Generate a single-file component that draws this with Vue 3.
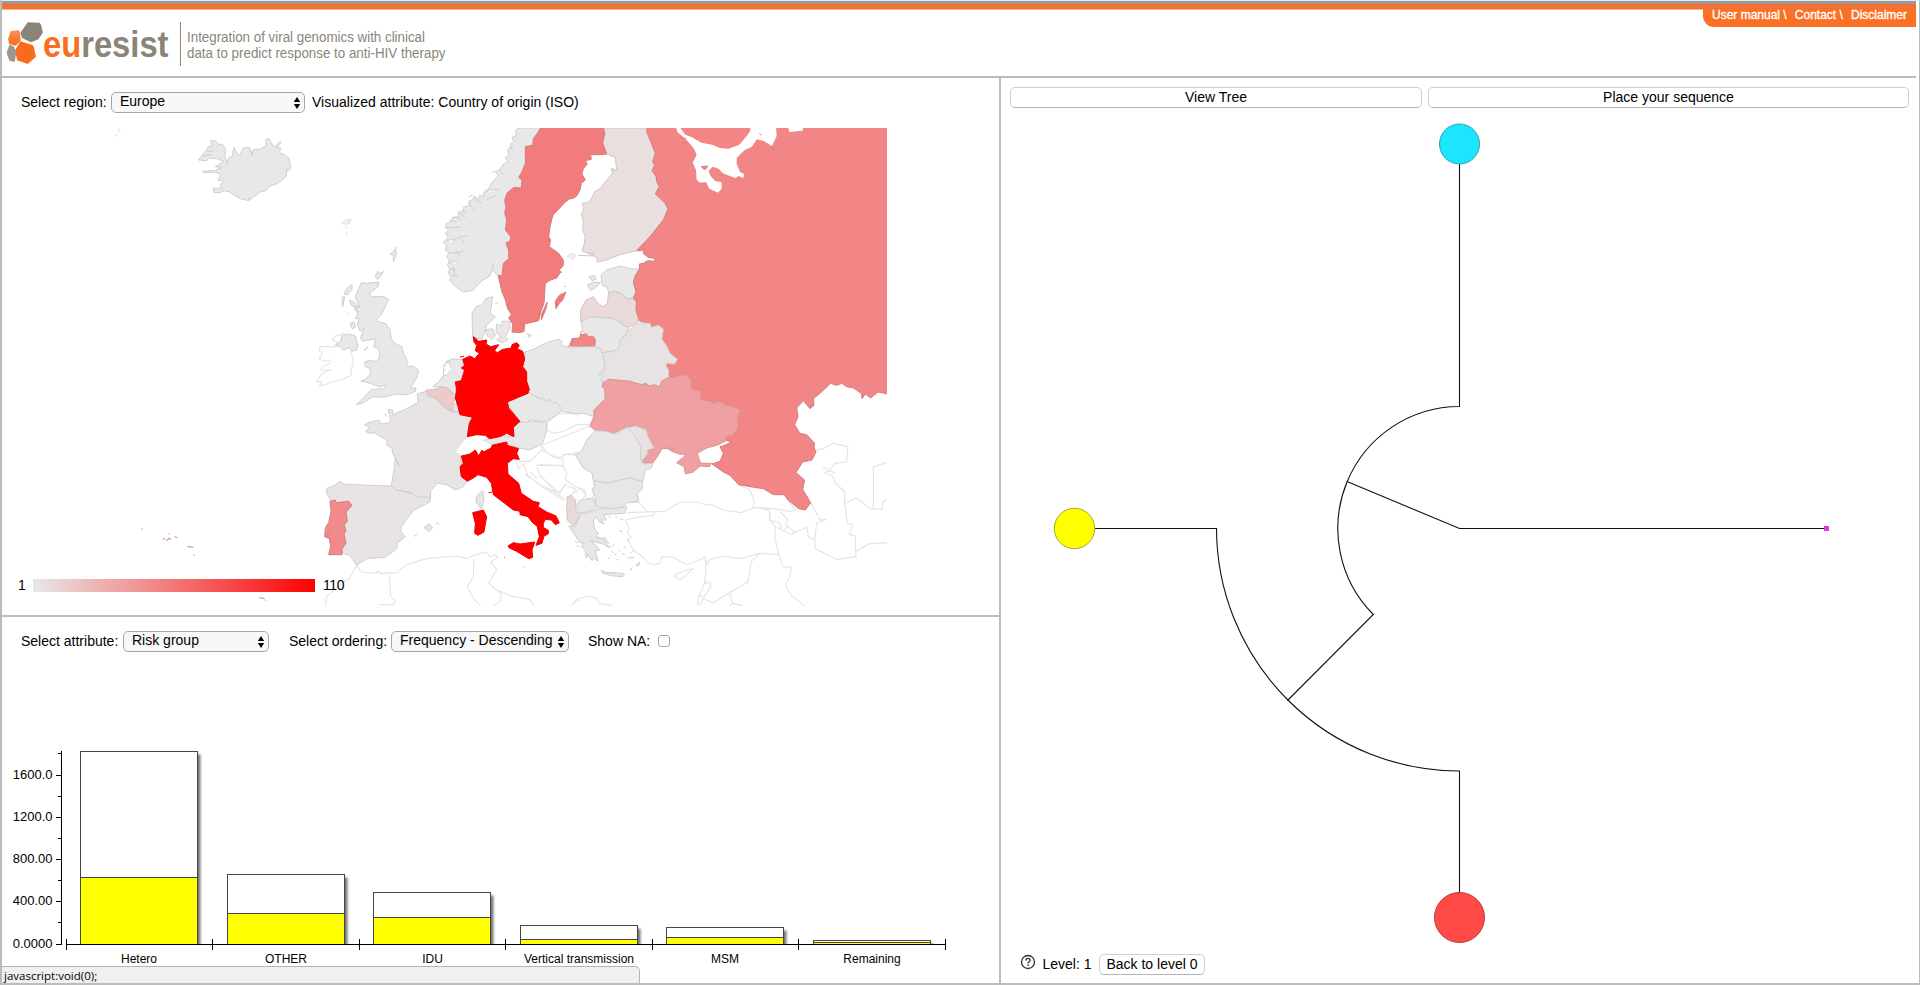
<script setup>
const fills = {
  none: '#ffffff', base: '#e8e8e8', faroe: '#f2f2f2', france: '#e8e4e4', romania: '#e8e6e7', finland: '#e9dfdf',
  latvia: '#ead9d9', belarus: '#e9e2e2', belgium: '#eccaca', sweden: '#f27c7c', russia: '#f28686',
  ukraine: '#f0a0a2', portugal: '#f18b8b', max: '#ff0000',
}

// Each tile holds country outlines in its own local grid (3 units per pixel).
const tiles = [
  { x: 180, y: 120, shapes: [
    ['base', 'M55,120 L68,104 L72,98 L80,92 L84,82 L96,76 L92,62 L106,62 L112,72 L128,74 L136,88 L135,112 L142,126 L147,112 L156,110 L162,82 L172,102 L180,106 L190,84 L208,82 L216,106 L220,88 L240,88 L250,82 L258,78 L258,58 L268,56 L276,74 L286,80 L298,66 L304,66 L290,82 L302,84 L298,98 L312,104 L328,116 L330,130 L332,146 L318,158 L320,168 L306,180 L290,192 L270,198 L256,212 L240,216 L222,230 L206,242 L180,236 L166,228 L150,216 L132,212 L120,218 L102,218 L100,204 L112,206 L126,200 L120,194 L134,184 L114,180 L122,164 L106,156 L70,158 L68,154 L90,152 L104,152 L126,142 L106,140 L132,124 L110,116 L88,114 L80,122Z M142,126 L142,136 M216,106 L214,92 M66,108 L96,104 M80,96 L104,92 M206,240 L210,230 M318,158 L322,144'],
    ['faroe', 'M486,308 L500,300 L514,298 L506,312 L490,312Z M496,335 L504,347 M496,318 L502,326'],
    ['base', 'M650,380 L640,395 L630,402 L640,405 L640,426 L650,400 L646,390Z M586,468 L594,454 L600,460 L610,454 L602,470 L592,478Z M516,494 L500,506 L492,522 L504,524 L516,508Z M486,532 L494,530 L488,560Z M502,584 L508,578'],
    ['base', 'M544,488 L560,490 L596,486 L594,500 L568,520 L574,530 L612,530 L626,538 L616,560 L604,584 L586,602 L600,606 L618,612 L630,630 L634,656 L644,670 L666,680 L670,700 L680,718 L682,740 L700,738 L716,752 L710,774 L700,790 L690,804 L708,804 L706,814 L680,824 L650,822 L632,826 L610,832 L580,830 L566,838 L550,848 L530,854 L550,834 L562,820 L576,808 L610,806 L620,796 L598,800 L580,794 L560,786 L542,784 L556,778 L572,762 L568,744 L556,740 L554,726 L566,722 L592,724 L598,710 L598,690 L582,680 L584,664 L590,656 L566,660 L548,664 L542,654 L552,626 L540,634 L532,612 L538,596 L526,596 L534,576 L524,570 L534,552 L526,530 L532,516Z M508,540 L524,548 L528,566 L514,556Z M510,610 L522,606 L526,622 L516,626Z M528,560 L540,556 L530,574 L544,572 M552,690 L564,680 L556,690Z'],
    ['base', 'M486,648 L506,642 L526,648 L534,676 L530,690 L514,694 L508,682 L490,690 L480,680 L466,676 L482,664Z'],
    ['base', 'M1014,24 L1006,34 L1010,46 L996,52 L1002,64 L990,74 L996,82 L982,90 L988,104 L976,112 L984,126 L970,132 L962,146 L946,156 L956,166 L946,176 L934,190 L926,206 L914,214 L908,232 L900,224 L896,238 L882,228 L878,240 L866,244 L872,256 L850,262 L852,274 L834,278 L838,290 L818,292 L816,304 L800,310 L796,322 L806,330 L796,340 L804,352 L790,368 L800,376 L796,390 L806,400 L800,410 L808,424 L802,436 L810,446 L804,460 L814,470 L808,480 L826,500 L850,516 L878,512 L904,484 L930,468 L936,450 L944,456 L952,466 L964,470 L1000,470 L1100,100 L1090,24Z M800,322 L842,322 M800,362 L820,358 L822,368 M816,360 L846,350 L862,348 M840,350 L852,370 M806,398 L830,400 L850,392 M826,390 L840,408 M804,430 L826,424 L836,430 M820,440 L824,470 M806,446 L832,450 M812,468 L834,466 M866,232 L878,224 M808,300 L830,306 M820,290 L846,300 M836,276 L856,292 M912,220 L930,210 L958,208 M920,240 L950,226 M936,450 L940,430 M842,270 L862,282 M864,250 L886,272 M884,238 L906,250 M986,80 L1002,90 M960,150 L970,164 M946,152 L936,158'],
    ['base', 'M878,648 L876,580 L888,560 L906,554 L920,534 L938,530 L934,560 L930,580 L946,590 L930,606 L920,616 L912,640 L906,656 L880,654Z M916,630 L938,626 L946,646 L936,658 L922,648Z M950,612 L966,618 L966,604 L990,604 L990,624 L976,650 L984,660 L966,668 L950,660 L962,648 L948,636Z M1042,640 L1054,646 L1048,652Z M946,550 L954,548 M962,576 L964,574'],
  ] },
  { x: 420, y: 120, shapes: [
    ['finland', 'M552,24 L556,40 L548,70 L560,102 L586,112 L590,150 L574,150 L578,158 L568,172 L552,190 L540,206 L524,216 L514,236 L504,248 L486,250 L492,264 L484,284 L490,300 L488,330 L496,350 L492,376 L486,392 L510,402 L530,412 L532,426 L560,420 L600,404 L650,392 L690,350 L730,300 L744,268 L736,250 L708,222 L718,200 L710,184 L708,168 L698,152 L704,136 L698,124 L708,104 L690,50 L682,32 L684,24Z M572,144 L584,148 M474,406 L524,408 M504,398 L526,402'],
    ['sweden', 'M362,24 L352,40 L340,56 L338,76 L316,80 L316,130 L306,155 L296,172 L306,180 L304,204 L282,202 L262,218 L254,240 L258,262 L254,278 L260,300 L256,330 L272,350 L270,364 L258,368 L266,392 L266,416 L250,430 L246,468 L234,466 L240,490 L246,516 L256,540 L262,564 L274,584 L266,594 L278,612 L276,636 L300,638 L312,634 L314,612 L340,606 L356,602 L364,570 L372,550 L374,520 L376,490 L392,480 L410,474 L422,456 L418,450 L430,436 L430,420 L416,400 L388,380 L392,360 L386,350 L390,320 L396,296 L400,284 L412,272 L432,250 L446,238 L462,234 L470,228 L480,210 L484,190 L496,180 L486,162 L490,146 L502,132 L496,122 L514,118 L512,104 L540,104 L560,102 L548,68 L554,40 L550,24Z M394,254 L404,276 M414,448 L426,458 M438,516 L428,540 L418,550 L408,566 L406,544 L418,526Z M382,546 L378,566 L364,600 L366,580Z M432,498 L436,500'],
    ['faroe', 'M442,408 L452,400 L466,406 L460,418 L448,412Z'],
    ['base', 'M544,464 L560,450 L600,438 L630,446 L658,448 L648,466 L642,486 L650,516 L640,534 L622,536 L600,518 L582,514 L566,518 L562,502 L546,496 L544,480Z M506,470 L524,466 L530,476 L516,482Z M502,494 L522,486 L540,488 L526,504 L512,512Z'],
    ['latvia', 'M482,606 L482,570 L498,540 L520,530 L534,550 L548,560 L562,552 L566,518 L582,514 L606,522 L620,538 L636,534 L650,546 L648,570 L658,602 L640,616 L620,622 L600,606 L576,592 L560,596 L510,590Z'],
    ['base', 'M484,606 L510,590 L575,596 L590,600 L610,616 L626,624 L618,640 L600,662 L602,680 L584,692 L548,698 L540,684 L524,682 L524,656 L500,646 L488,634Z'],
    ['russia', 'M484,644 L500,642 L502,650 L520,650 L526,660 L524,680 L450,678 L456,656 L478,654Z M442,682 L460,664 M480,650 L484,634'],
  ] },
  { x: 620, y: 120, shapes: [
    ['russia', 'M82,20 L80,34 L106,100 L98,124 L104,136 L96,152 L108,168 L110,184 L118,200 L106,222 L136,250 L144,268 L130,300 L90,350 L50,392 L66,392 L72,384 L70,400 L84,412 L100,414 L108,424 L82,422 L70,430 L58,432 L58,448 L46,466 L40,486 L48,516 L40,534 L50,546 L48,570 L58,602 L90,612 L94,622 L116,616 L130,626 L126,658 L140,680 L150,700 L172,718 L164,730 L140,728 L138,738 L146,750 L148,776 L180,764 L200,766 L214,782 L214,806 L242,814 L244,840 L272,844 L280,850 L300,844 L320,858 L330,856 L362,870 L352,896 L356,920 L340,944 L318,950 L320,962 L336,966 L308,978 L300,980 L310,1000 L300,1024 L276,1032 L310,1056 L330,1066 L356,1094 L390,1100 L430,1106 L460,1124 L492,1124 L504,1140 L536,1166 L556,1170 L572,1148 L548,1108 L554,1080 L528,1058 L548,1026 L576,1020 L588,996 L582,982 L584,970 L560,944 L540,940 L524,914 L534,890 L530,864 L550,842 L570,866 L582,856 L580,836 L600,820 L632,790 L650,796 L666,790 L680,800 L700,804 L724,820 L726,836 L736,822 L752,834 L774,816 L804,822 L804,20Z'],
    ['none', 'M168,20 L172,36 L200,60 L222,86 L230,104 L218,128 L228,150 L230,180 L240,188 L258,186 L268,206 L294,218 L306,204 L304,186 L286,184 L270,166 L266,152 L278,140 L296,146 L308,160 L346,174 L356,168 L370,174 L372,162 L360,156 L350,132 L350,114 L374,90 L396,80 L410,58 L430,62 L456,78 L470,48 L468,20 L392,20 L390,34 L382,46 L358,74 L326,86 L300,84 L276,74 L244,68 L216,52 L196,44 L178,20Z M504,20 L508,36 L548,32 L550,20Z'],
    ['russia', 'M244,140 L264,138 L254,150Z M418,40 L424,46 M456,78 L462,92 M182,52 L198,56 M184,70 L200,68 M306,158 L308,168'],
  ] },
  { x: 540, y: 320, shapes: [
    ['base', 'M-46,96 L-20,88 L20,68 L54,58 L66,64 L64,74 L84,82 L166,80 L184,90 L194,124 L192,152 L178,162 L188,190 L196,210 L194,238 L162,270 L162,290 L130,280 L110,282 L90,278 L66,274 L50,256 L34,248 L20,246 L-10,230 L-32,220 L-40,184 L-52,140 L-46,116Z'],
    ['belarus', 'M186,98 L222,94 L238,82 L240,60 L262,42 L260,36 L280,20 L298,8 L330,10 L334,22 L356,16 L370,28 L366,58 L380,78 L390,100 L412,118 L404,132 L380,130 L378,138 L386,150 L386,172 L366,182 L358,202 L344,194 L328,198 L318,190 L304,194 L270,184 L205,178 L188,190 L188,168 L178,162 L192,152 L194,124Z'],
    ['ukraine', 'M388,172 L404,174 L420,164 L440,166 L454,182 L454,206 L482,214 L484,240 L512,244 L520,250 L540,244 L560,258 L570,256 L602,270 L592,296 L596,320 L580,344 L558,350 L556,364 L530,376 L500,384 L472,400 L478,420 L484,430 L514,430 L508,440 L480,438 L460,456 L436,462 L432,440 L410,428 L424,416 L440,404 L416,402 L396,394 L384,386 L366,386 L352,410 L338,430 L304,428 L322,402 L318,390 L340,388 L334,370 L322,346 L300,328 L284,318 L262,320 L240,330 L220,342 L198,334 L166,330 L150,318 L162,290 L162,270 L196,236 L194,206 L186,200 L188,190 L205,178 L270,184 L304,194 L318,190 L328,198 L344,194 L358,202 L366,182Z M384,376 L400,392 M386,384 L408,388'],
    ['belarus', 'M264,324 L286,318 L318,330 L324,350 L342,384 L322,390 L322,402 L304,424 L300,390 L290,362Z'],
    ['romania', 'M164,332 L198,334 L220,342 L264,324 L290,356 L302,380 L302,420 L310,432 L338,430 L334,444 L316,452 L308,484 L270,474 L240,480 L206,490 L160,482 L156,458 L130,444 L116,420 L106,404 L124,396 L140,360Z'],
    ['romania', 'M160,482 L206,490 L240,480 L270,474 L308,484 L306,508 L292,520 L296,544 L262,548 L246,562 L218,566 L190,562 L168,560 L166,530 L156,510 L164,498Z'],
    ['base', 'M110,552 L126,540 L160,534 L168,560 L150,574 L116,580Z'],
    ['latvia', 'M82,530 L94,526 L106,540 L108,570 L118,590 L100,620 L82,600 L80,570Z'],
    ['romania', 'M104,622 L120,590 L120,580 L150,578 L170,566 L215,566 L260,560 L254,580 L220,582 L190,584 L200,600 L184,600 L192,612 L178,606 L170,592 L160,600 L164,630 L176,640 L168,648 L190,660 L208,684 L190,672 L150,662 L164,672 L180,690 L166,692 L174,724 L160,714 L156,722 L144,704 L138,714 L136,690 L124,680 L132,670 L120,668 L108,650 L86,618Z M184,750 L200,758 L230,758 L254,762 L248,770 L220,768 L188,760Z M104,664 L114,668 M110,676 L118,680 M168,654 L196,654 L206,672 M240,596 L250,600 M238,632 L248,636 M260,660 L268,664 M206,676 L216,682 M214,692 L222,700 M224,706 L230,700 M236,688 L242,694 M204,716 L210,714 M230,718 L236,720 M246,700 L254,704 M272,700 L280,692 M262,714 L284,712 M288,736 L300,726 L296,736Z M272,752 L276,742 M206,588 L212,592 M226,590 L232,594 M250,684 L258,680 M218,672 L222,678'],
  ] },
  { x: 300, y: 320, shapes: [
    ['france', 'M80,506 L104,496 L120,484 L134,492 L200,496 L274,498 L290,510 L340,522 L392,532 L390,546 L340,572 L304,620 L302,634 L316,650 L292,670 L290,686 L256,712 L200,716 L170,736 L150,706 L128,700 L90,560 L92,540 L80,520Z M372,622 L388,612 L398,624 L386,634Z M408,608 L418,614 M342,650 L352,642'],
    ['france', 'M278,284 L316,268 L354,248 L352,222 L378,214 L384,228 L416,240 L428,260 L456,276 L474,278 L518,292 L506,320 L502,350 L488,366 L466,396 L480,402 L484,430 L482,450 L502,480 L490,500 L466,510 L440,494 L412,490 L392,512 L392,532 L350,530 L330,516 L290,510 L274,496 L282,450 L286,412 L298,438 L278,400 L276,384 L260,376 L262,360 L234,346 L226,338 L210,340 L196,334 L208,324 L194,314 L206,308 L236,300 L244,312 L270,308 L270,290 L264,268 L278,270Z M548,512 L552,540 L544,566 L528,546 L530,528Z M254,280 L260,290'],
    ['portugal', 'M90,544 L106,540 L108,548 L146,544 L156,556 L138,576 L142,604 L132,614 L138,632 L132,642 L138,670 L126,686 L126,704 L86,704 L92,680 L88,656 L74,650 L76,624 L86,608 L94,570Z M80,650 L92,636'],
    ['base', 'M398,200 L416,186 L430,166 L440,166 L452,150 L450,130 L438,126 L460,116 L488,120 L492,150 L484,182 L466,188 L468,228 L446,206 L430,200Z M430,164 L432,134 L446,120'],
    ['none', 'M432,140 L446,134 L454,148 L438,162Z'],
    ['belgium', 'M378,210 L402,208 L430,200 L446,206 L466,232 L460,250 L460,274 L442,268 L428,256 L410,238 L386,226Z'],
    ['base', 'M462,250 L476,258 L478,276 L460,274Z'],
    ['base', 'M550,362 L568,356 L600,346 L642,350 L640,322 L660,306 L700,304 L740,306 L740,330 L728,370 L690,390 L656,384 L620,368 L560,374Z'],
    ['base', 'M622,246 L650,234 L688,218 L706,230 L718,238 L730,234 L738,246 L750,238 L762,250 L772,248 L786,270 L772,284 L746,300 L730,306 L690,298 L684,308 L660,306 L634,270Z'],
    ['none', 'M466,396 L488,366 L502,350 L530,344 L552,364 L574,376 L546,408 L526,390 L484,406Z'],
    ['max', 'M520,50 L530,58 L536,64 L560,60 L558,72 L572,80 L596,74 L584,92 L592,98 L608,88 L634,84 L636,74 L650,68 L658,76 L652,86 L668,94 L674,116 L668,140 L680,156 L680,184 L688,208 L684,220 L650,234 L622,246 L626,264 L660,304 L640,322 L642,350 L620,340 L600,350 L568,356 L556,346 L530,344 L502,350 L508,310 L518,292 L480,284 L474,260 L466,234 L470,208 L466,186 L484,182 L494,150 L484,144 L494,136 L488,118 L510,108 L524,116 L538,100 L526,92 L530,76 L522,66Z M480,112 L492,108'],
    ['max', 'M484,408 L510,402 L526,390 L536,408 L546,390 L550,396 L574,384 L576,376 L620,366 L622,376 L656,386 L650,400 L658,418 L640,416 L622,430 L624,462 L656,490 L664,520 L700,544 L718,548 L714,560 L740,576 L768,588 L778,608 L766,614 L754,600 L736,598 L730,610 L730,622 L746,632 L744,642 L732,648 L726,670 L708,676 L718,650 L712,620 L696,606 L684,590 L660,584 L660,574 L640,570 L614,550 L580,524 L574,490 L560,472 L534,464 L520,474 L502,484 L484,470 L480,440 L490,430Z M518,578 L550,570 L560,590 L552,636 L534,646 L524,640 L526,610Z M624,678 L640,668 L660,672 L704,666 L696,690 L698,712 L686,716 L650,694 L628,684Z M566,518 L576,516 M612,712 L614,712'],
  ] },
  { x: 0, y: 500, shapes: [
    ['portugal', 'M424,88 L428,86 M488,118 L496,116 M498,122 L506,118 M506,100 L508,103 M524,110 L532,113 M562,140 L580,142 M580,164 L584,168 M778,293 L794,296 M796,300 L799,302 M504,114 L514,118'],
  ] },
]

const borders = [
  { x: 300, y: 320, d: 'M136,42 L126,40 L120,46 L106,48 L98,60 L112,66 L108,76 L100,82 L88,80 L60,80 L58,92 L66,98 L58,118 L76,124 L88,120 L92,130 L72,138 L62,150 L78,152 L94,148 L80,154 L62,166 L50,184 L66,186 L58,198 L76,194 L96,186 L120,180 L140,172 L154,166 L152,150 L160,132 L158,112 L152,96 M170,736 L150,774 L126,790 L80,830 L76,857 M170,736 L184,756 L230,760 L234,752 L240,760 L290,758 L320,734 L380,716 L470,708 L500,716 L520,706 L560,696 L570,710 L586,704 L592,712 L572,726 L590,750 L566,790 L590,810 L640,830 L690,838 L700,857 M268,764 L272,830 L286,842 L280,854 L238,854 M522,716 L520,770 L502,800 L520,836 L542,857 M590,810 L604,822 L602,842 L582,857 M650,426 L656,446 L670,430 L680,460 L712,490 L744,510 L790,542 M690,456 L712,476 M700,480 L730,502 M676,462 L690,476 M722,376 L726,390 L690,424 L656,424 M726,390 L760,410 L784,416 M708,436 L786,436 L796,450 M710,440 L722,470 L780,520 M670,740 L678,742 M820,848 L840,840' },
  { x: 540, y: 320, d: 'M20,310 L56,280 L110,282 L130,278 L162,290 L150,314 L110,314 L70,334 L40,340 L22,330Z M10,350 L22,330 M150,318 L164,332 L124,396 L80,402 L56,414 L20,400 L6,376Z M68,404 L106,404 L130,444 L156,458 L164,500 L160,534 L140,536 L134,510 L118,504 L106,500 L76,480 L80,460 L70,440Z M0,434 L66,438 M76,490 L60,520 L40,510 L0,464 M58,514 L76,496 L106,506 L96,524 L80,536 M104,520 L118,504 L138,524 L124,540 L108,540 M0,494 L40,514 L78,540 M264,548 L296,546 L320,574 L344,576 L340,586 L290,592 L256,600 L268,624 L262,640 L274,650 L262,660 L280,690 L310,712 L320,726 L340,734 L360,730 L366,710 L400,712 L440,734 L470,724 L496,712 L502,734 L510,718 L550,708 L600,716 L660,700 L716,704 L704,650 L706,620 L688,600 L690,572 L650,562 L600,578 L550,570 L520,556 L490,552 L470,546 L420,546 L376,574 L262,578 M596,496 L630,510 L642,540 L640,562 L700,566 L750,574 L766,570 L744,542 M690,572 L690,600 L720,610 L726,634 L744,620 L764,636 L756,644 L710,622 M720,574 L744,600 L736,614 L750,624 M760,640 L800,622 L806,652 L824,660 L826,686 L890,718 L948,710 L946,648 L928,644 L938,616 L922,610 L914,550 L914,516 L884,486 L878,468 L854,458 L866,450 L886,460 M828,390 L850,386 L880,370 L924,380 L920,426 L884,430 L866,456 M848,440 L860,446 M812,548 L840,600 L858,598 L830,610 L824,660 M914,550 L950,534 L990,566 L1026,568 L1028,546 L1041,538 M1000,568 L1000,440 L1041,428 M950,694 L984,672 L1041,668 M496,712 L498,740 L494,790 L510,786 L512,800 L490,836 L480,857 M498,780 L476,830 L472,857 M476,828 L490,830 M490,836 L520,848 L568,818 L624,786 L634,724 L660,700 M568,818 L578,850 L608,857 M578,850 L570,857 M716,704 L730,740 L754,742 L750,770 L736,796 L754,826 L792,857 M404,768 L412,760 L460,746 L440,764 L420,780Z M94,857 L110,838 L144,828 L172,836 L176,850 L218,857' },
  { x: 0, y: 120, d: 'M346,50 L350,42 M354,38 L358,28 L362,24' },
]

const bars = [
  { label: 'Hetero', x: 80.5, top: 751.5, sel: 877.5, mid: 139 },
  { label: 'OTHER', x: 227.5, top: 874.5, sel: 913.5, mid: 286 },
  { label: 'IDU', x: 373.5, top: 892.5, sel: 917.5, mid: 432.5 },
  { label: 'Vertical transmission', x: 520.5, top: 925.5, sel: 939.5, mid: 579 },
  { label: 'MSM', x: 666.5, top: 927.5, sel: 937.5, mid: 725 },
  { label: 'Remaining', x: 813.5, top: 940.5, sel: 942.5, mid: 872 },
]
const yLabels = [
  ['1600.0', 775.5], ['1200.0', 817.5], ['800.00', 859.5], ['400.00', 901.5], ['0.0000', 944.5],
]
const minor = [753.5, 796.5, 838.5, 880.5, 922.5]
const xTicks = [66.5, 212.5, 359.5, 505.5, 652.5, 798.5, 945.5]
</script>

<template>
  <div class="page">
    <header class="header">
      <svg class="brand" width="460" height="66" viewBox="0 10 460 66">
        <defs>
          <linearGradient id="og" x1="0" y1="0" x2="0" y2="1">
            <stop offset="0" stop-color="#fb9258" /><stop offset="1" stop-color="#f96a1b" />
          </linearGradient>
        </defs>
        <g transform="scale(.40816 .33333)">
          <path fill="#8b8577" d="M68,67 L96,68 Q100,70 101,76 L105,98 L94,118 L76,127 L54,114 L50,98Z" />
          <path fill="url(#og)" d="M26,94 L46,90 L49,98 L51,122 L38,137 L22,132 L20,116Z" />
          <path fill="#f96a1b" d="M50,124 L80,135 L83,142 L88,170 L68,192 L42,181 L37,150Z" />
          <path fill="#9b978c" d="M23,134 L34,139 L40,158 L36,186 L23,182 L16,158Z" />
        </g>
        <text class="name" x="43" y="56.5" textLength="125.5" lengthAdjust="spacingAndGlyphs"><tspan fill="#f96f22">eu</tspan><tspan fill="#8b8577">resist</tspan></text>
        <path d="M180.5,22V66" stroke="#8b8577" />
        <text class="tag" x="187" y="42" textLength="238" lengthAdjust="spacingAndGlyphs">Integration of viral genomics with clinical</text>
        <text class="tag" x="187" y="58" textLength="258.5" lengthAdjust="spacingAndGlyphs">data to predict response to anti-HIV therapy</text>
      </svg>
      <nav class="links"><a>User manual \</a><a>Contact \</a><a>Disclaimer</a></nav>
    </header>

    <main class="main">
      <div class="left">
        <section class="map-panel">
          <div class="controls">
            <span class="t-region">Select region:</span>
            <div class="select region">Europe<svg width="8" height="14" viewBox="0 0 8 14"><path d="M4,1L7.2,6H.8ZM4,13L7.2,8H.8Z" /></svg></div>
            <span class="t-vis">Visualized attribute: Country of origin (ISO)</span>
          </div>
          <svg class="map" width="887" height="478" viewBox="0 128 887 478">
            <defs>
              <linearGradient id="scale"><stop offset="0" stop-color="#e8e8e8" /><stop offset=".5" stop-color="#f37777" /><stop offset="1" stop-color="#ff0000" /></linearGradient>
            </defs>
            <g v-for="(b, i) in borders" :key="'b' + i" :transform="`translate(${b.x} ${b.y}) scale(.33333)`">
              <path :d="b.d" fill="none" stroke="#e4e4e4" stroke-width="3.4" stroke-linejoin="round" />
            </g>
            <g v-for="(t, i) in tiles" :key="i" :transform="`translate(${t.x} ${t.y}) scale(.33333)`">
              <path v-for="(s, j) in t.shapes" :key="j" :d="s[1]" :fill="fills[s[0]]" :class="['land', s[0]]" />
            </g>
            <rect x="33" y="579" width="282" height="13" fill="url(#scale)" />
            <text x="18" y="590" class="legend">1</text>
            <text x="323" y="590" class="legend" textLength="21.5">110</text>
          </svg>
        </section>

        <section class="chart-panel">
          <div class="controls">
            <span class="t-attr">Select attribute:</span>
            <div class="select attr">Risk group<svg width="8" height="14" viewBox="0 0 8 14"><path d="M4,1L7.2,6H.8ZM4,13L7.2,8H.8Z" /></svg></div>
            <span class="t-order">Select ordering:</span>
            <div class="select order">Frequency - Descending<svg width="8" height="14" viewBox="0 0 8 14"><path d="M4,1L7.2,6H.8ZM4,13L7.2,8H.8Z" /></svg></div>
            <span class="t-na">Show NA:</span>
            <i class="check"></i>
          </div>
          <svg class="chart" width="997" height="231" viewBox="0 740 997 231">
            <defs>
              <filter id="soft" x="-10%" y="-10%" width="120%" height="120%"><feGaussianBlur stdDeviation="1.1" /></filter>
              <clipPath id="plot"><rect x="0" y="740" width="997" height="204" /></clipPath>
            </defs>
            <g clip-path="url(#plot)">
              <rect v-for="b in bars" :key="b.label" :x="b.x + 3" :y="b.top + 3" width="117" :height="947 - b.top" fill="#777" filter="url(#soft)" />
            </g>
            <g v-for="b in bars" :key="b.label">
              <rect :x="b.x" :y="b.top" width="117" :height="944.5 - b.top" fill="#fff" stroke="#444" />
              <rect :x="b.x" :y="b.sel" width="117" :height="944.5 - b.sel" fill="#ff0" stroke="#444" />
              <text :x="b.mid" y="962.5" text-anchor="middle" class="xl">{{ b.label }}</text>
            </g>
            <path d="M61.5,751V945M66,944.5H946" class="axis" />
            <path v-for="x in xTicks" :key="x" :d="`M${x},939V950`" class="axis" />
            <path v-for="y in minor" :key="y" :d="`M58,${y}H62`" class="axis" />
            <g v-for="l in yLabels" :key="l[0]">
              <path :d="`M56,${l[1]}H62`" class="axis" />
              <text x="52.5" :y="l[1] + 3.5" text-anchor="end" class="yl">{{ l[0] }}</text>
            </g>
          </svg>
        </section>
      </div>

      <section class="tree-panel">
        <div class="tabs">
          <button class="tab-view">View Tree</button>
          <button class="tab-place">Place your sequence</button>
        </div>
        <svg class="tree" width="915" height="834" viewBox="1001 117 915 834">
          <g fill="none" stroke="#111" stroke-width="1.1">
            <path d="M1459.5,164V406.5A122,122 0 0 0 1373.3,614.5L1287.5,700.5" />
            <path d="M1095,528.5H1216.5A243,243 0 0 0 1459.5,771V893" />
            <path d="M1347,481.5L1459.5,528.5H1825" />
          </g>
          <circle cx="1459.5" cy="144" r="20" fill="#1de5ff" stroke="#2aa5b5" />
          <circle cx="1074.5" cy="528.5" r="20.2" fill="#ff0" stroke="#aaa52d" />
          <circle cx="1459.5" cy="917.5" r="25" fill="#ff4a47" stroke="#b23c3a" />
          <rect x="1824" y="526" width="5" height="5" fill="#e832e8" />
        </svg>
        <div class="level">
          <svg width="16" height="16" viewBox="0 0 16 16"><circle cx="8" cy="8" r="6.5" fill="none" stroke="#333" stroke-width="1.3" /><path d="M5.9,6.5C5.9,3.6 10.2,3.8 10.1,6.3C10,7.8 8,7.7 8,9.4M8,10.6V12" fill="none" stroke="#333" stroke-width="1.4" /></svg>
          <span>Level: 1</span>
          <button>Back to level 0</button>
        </div>
      </section>
    </main>
    <div class="status">javascript:void(0);</div>
  </div>
</template>

<style>
body { margin: 0; background: #fff; }
</style>

<style scoped>
* { box-sizing: border-box; }
.page {
  position: relative; width: 1920px; height: 985px; overflow: hidden; display: flex; flex-direction: column;
  border-top: 1px solid #e9eced; border-left: 2px solid #bbb; border-right: 1px solid #bbb; border-bottom: 2px solid #bdbdbd;
  background: #fff; color: #000; font: 14px/20px "Liberation Sans", Arial, sans-serif;
}
.page::before { content: ''; position: absolute; left: -2px; top: 0; width: 2px; height: 154px; background: #999; }
.header {
  position: relative; height: 77px; flex: none; margin-right: 3px;
  border-top: 3px solid #999; border-bottom: 2px solid #bdbdbd; display: flex; justify-content: space-between; align-items: flex-start;
  background: linear-gradient(#f37035 0 5px, #fbb999 5px 6px, #fff 6px);
}
.brand { display: block; margin: 6px 0 0 -2px; overflow: visible; }
.name { font-weight: 700; font-size: 36px; }
.tag { font-size: 14px; fill: #8b8577; }
.links {
  width: 213px; height: 18px; margin-top: 5px; padding: 0 9px 0 9px; display: flex; justify-content: space-between;
  background: #fb7024; border-bottom-left-radius: 11px; color: #fff; font-size: 12px; line-height: 12px;
}
.links a { -webkit-text-stroke: .35px #fff; white-space: pre; }
.main { flex: 1; display: flex; min-height: 0; }
.left { width: 999px; flex: none; border-right: 2px solid #bdbdbd; display: flex; flex-direction: column; }
.map-panel { height: 539px; flex: none; border-bottom: 2px solid #bdbdbd; }
.controls { display: flex; align-items: center; padding-left: 19px; white-space: nowrap; }
.controls > span { padding-bottom: 2px; }
.map-panel .controls { padding-top: 14px; height: 35px; }
.chart-panel .controls { padding-top: 14px; height: 35px; }
.select {
  height: 21px; border: 1px solid #a6a6a6; border-radius: 5px; background: #f8f8f8; display: flex; align-items: center;
  justify-content: space-between; padding: 0 3px 2px 8px; line-height: 17px;
}
.select svg { position: relative; top: 1px; }
.t-region { width: 90px; }
.region { width: 194px; margin-right: 7px; }
.t-vis { letter-spacing: .02px; }
.t-attr { width: 102px; }
.attr { width: 146px; }
.t-order { width: 102px; margin-left: 20px; }
.order { width: 178px; }
.t-na { width: 70px; margin-left: 19px; }
.check { width: 12px; height: 12px; margin-bottom: 1px; border: 1px solid #aaa; border-radius: 3px; background: #fff; }
.map { display: block; margin: 15px 0 0 -2px; }
.land { stroke: #cfcfcf; stroke-width: 3; stroke-linejoin: round; }
.land.none { stroke: none; }
.land.faroe { stroke: #dedede; }
.land.max { stroke: #f00000; }
.land.finland, .land.latvia, .land.belgium { stroke: #d3c4c4; }
.land.sweden, .land.russia, .land.portugal { stroke: #d77b7b; }
.land.ukraine { stroke: #d79494; }
.legend { font-size: 14px; }
.chart { display: block; margin: 88px 0 0 -2px; }
.axis { stroke: #000; fill: none; }
.xl { font-size: 12px; }
.yl { font-size: 13px; }
.tree-panel { flex: 1; min-width: 0; }
button {
  font: 14px/18px "Liberation Sans", Arial, sans-serif; color: #000; background: #fff; padding: 0 0 1px;
  border: 1px solid #cfcfcf; border-bottom-color: #b5b5b5; border-radius: 5px; height: 21px;
}
.tabs { display: flex; gap: 6px; padding: 9px 0 0 9px; }
.tab-view { width: 412px; }
.tab-place { width: 481px; }
.tree { display: block; margin-top: 9px; }
.level { display: flex; align-items: center; height: 24px; padding: 3px 0 0 19px; }
.level svg { margin-bottom: 5px; }
.level span { margin-left: 6.5px; width: 56.5px; padding-bottom: 2px; }
.level button { width: 106px; }
.status {
  position: absolute; left: -2px; bottom: -2px; width: 640px; height: 19px; background: #f0f0f0; border: 1px solid #b4b4b4;
  border-left: 0; border-top-right-radius: 5px; padding-left: 4px; font: 11.5px/17px "Open Sans", "Noto Sans", sans-serif;
}
</style>
